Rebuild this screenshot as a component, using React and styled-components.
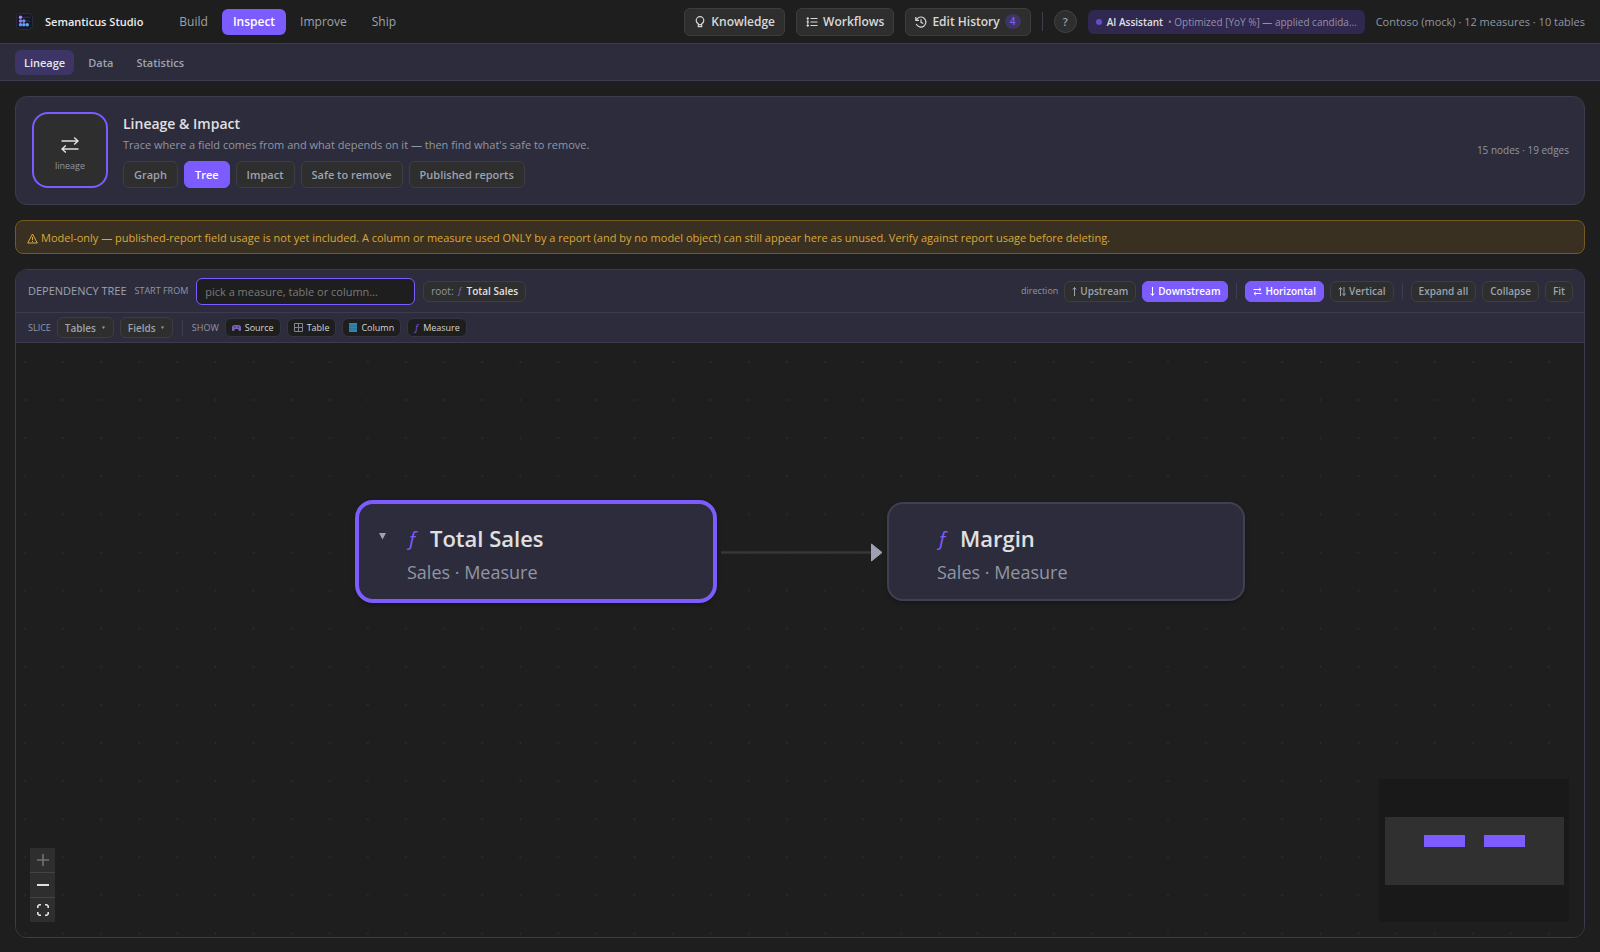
import React, { useState } from "react";
import styled, { createGlobalStyle, css } from "styled-components";

const GlobalStyle = createGlobalStyle`
  * {
    box-sizing: border-box;
  }
  body {
    margin: 0;
    background: #1e1e1e;
    color: #e0e0e0;
    font-family: "Open Sans", "Noto Sans", sans-serif;
    font-size: 12px;
    line-height: 18px;
  }
  button, input, select {
    font-family: inherit;
    margin: 0;
  }
  h1, h2, p {
    margin: 0;
  }
`;

const Page = styled.div`
  display: flex;
  flex-direction: column;
  min-height: 100vh;
`;

const Header = styled.header`
  display: flex;
  align-items: center;
  justify-content: space-between;
  height: 44px;
  padding: 0 15px 0 16px;
  border-bottom: 1px solid #3c3a45;
`;

const HeaderGroup = styled.div`
  display: flex;
  align-items: center;
  gap: ${(props) => props.$gap || 12}px;
`;

const Brand = styled.h1`
  font-size: 11px;
  font-weight: 600;
  line-height: 18px;
  color: #ececec;
`;

const MainNav = styled.nav`
  display: flex;
  gap: 3px;
  margin-left: 13px;
`;

const MainTab = styled.button`
  height: 26px;
  padding: 0 11px;
  border: 0;
  border-radius: 6px;
  background: ${(props) => (props.$active ? "#7c5cff" : "transparent")};
  color: ${(props) => (props.$active ? "#fff" : "#9ca3af")};
  font-size: 12px;
  font-weight: ${(props) => (props.$active ? 600 : 500)};
  cursor: pointer;
`;

const HeaderButton = styled.button`
  display: flex;
  align-items: center;
  gap: 5px;
  height: 28px;
  padding: 0 9px;
  border: 1px solid #3e3e3e;
  border-radius: 6px;
  background: #2e2e2e;
  color: #d8d8d8;
  font-size: 12px;
  font-weight: 600;
  white-space: nowrap;
  cursor: pointer;
`;

const Count = styled.span`
  min-width: 16px;
  height: 15px;
  border-radius: 8px;
  background: #3d3563;
  color: #7c5cff;
  font-size: 10px;
  line-height: 15px;
  text-align: center;
`;

const Divider = styled.span`
  width: 1px;
  height: ${(props) => props.$height || 16}px;
  margin: 0 ${(props) => props.$space || 0}px;
  background: #3f3d4a;
`;

const HelpButton = styled.button`
  width: 23px;
  height: 23px;
  padding: 0;
  border: 1px solid #444;
  border-radius: 50%;
  background: #2e2e2e;
  color: #9ca3af;
  font-size: 11px;
  font-weight: 600;
  cursor: pointer;
`;

const AgentPill = styled.div`
  display: flex;
  align-items: center;
  gap: 5px;
  height: 24px;
  padding: 0 8px;
  border-radius: 6px;
  background: #30284f;
  color: #9590a8;
  font-size: 10px;
  line-height: 16px;
  white-space: nowrap;
  b {
    color: #e0e0e0;
    font-weight: 600;
  }
`;

const StatusDot = styled.i`
  flex: none;
  width: 6px;
  height: 6px;
  border-radius: 50%;
  background: #674bcf;
`;

const Muted = styled.span`
  color: #9096a3;
  font-size: ${(props) => props.$size || 11}px;
  white-space: nowrap;
`;

const SubNav = styled.nav`
  display: flex;
  align-items: center;
  gap: 5px;
  height: 37px;
  padding: 0 15px;
  border-bottom: 1px solid #3d3b4d;
  background: #2d2c3c;
`;

const SubTab = styled.button`
  height: 25px;
  padding: 0 9px;
  border: 0;
  border-radius: 6px;
  background: ${(props) => (props.$active ? "#3d3565" : "transparent")};
  color: ${(props) => (props.$active ? "#e6e6e6" : "#9ca3af")};
  font-size: 11px;
  font-weight: 600;
  cursor: pointer;
`;

const Main = styled.main`
  display: flex;
  flex: 1;
  flex-direction: column;
  gap: 15px;
  padding: 15px 15px 14px;
`;

const Hero = styled.section`
  display: flex;
  align-items: center;
  gap: 15px;
  padding: 15px 15px 16px 16px;
  border: 1px solid #3d3b4d;
  border-radius: 12px;
  background: #2d2c3c;
`;

const HeroIcon = styled.div`
  display: flex;
  flex-direction: column;
  align-items: center;
  justify-content: center;
  gap: 5px;
  width: 76px;
  height: 76px;
  padding-top: 8px;
  border: 2px solid #7c5cff;
  border-radius: 16px;
  background: #2e2e2e;
  color: #9096a3;
  font-size: 9px;
  line-height: 14px;
`;

const HeroBody = styled.div`
  flex: 1;
  h2 {
    font-size: 14px;
    font-weight: 600;
    line-height: 24px;
  }
  p {
    color: #9096a3;
    font-size: 11px;
    line-height: 18px;
  }
`;

const ModeRow = styled.div`
  display: flex;
  gap: 6px;
  margin-top: 7px;
`;

const buttonColors = css`
  border: 1px solid ${(props) => (props.$active ? "#7c5cff" : "#3e3e42")};
  background: ${(props) => (props.$active ? "#7c5cff" : "#2e2e2e")};
  color: ${(props) => (props.$active ? "#fff" : "#9ca3af")};
`;

const ModeButton = styled.button`
  ${buttonColors}
  height: 27px;
  padding: 0 10px;
  border-radius: 6px;
  font-size: 11px;
  font-weight: 600;
  cursor: pointer;
`;

const Warning = styled.div`
  display: flex;
  align-items: center;
  gap: 3px;
  padding: 8px 11px 6px;
  border: 1px solid #745a20;
  border-radius: 8px;
  background: #393022;
  color: #dba936;
  font-size: 11px;
`;

const Panel = styled.section`
  display: flex;
  flex: 1;
  flex-direction: column;
  overflow: hidden;
  border: 1px solid #3d3b4d;
  border-radius: 12px;
`;

const Toolbar = styled.div`
  display: flex;
  align-items: center;
  justify-content: space-between;
  height: 43px;
  padding: 0 11px 0 12px;
  border-bottom: 1px solid #3d3b4d;
  background: #2d2c3c;
`;

const FilterBar = styled(Toolbar)`
  justify-content: flex-start;
  gap: 6px;
  height: 30px;
`;

const ToolGroup = styled.div`
  display: flex;
  align-items: center;
  gap: ${(props) => props.$gap || 6}px;
`;

const PanelTitle = styled.h2`
  color: #9ca3af;
  font-size: 11px;
  font-weight: 500;
  line-height: 16px;
`;

const FieldLabel = styled.label`
  color: #9096a3;
  font-size: 9px;
  line-height: 16px;
`;

const RootInput = styled.input`
  width: 219px;
  height: 27px;
  padding: 0 8px;
  border: 1px solid #7c5cff;
  border-radius: 6px;
  outline: 0;
  background: #1e1e1e;
  color: #e0e0e0;
  font-size: 11px;
  &::placeholder {
    color: #7a7a7a;
    opacity: 1;
  }
`;

const RootChip = styled.span`
  display: flex;
  align-items: center;
  gap: 4px;
  height: 21px;
  padding: 0 7px;
  border: 1px solid #3e3e42;
  border-radius: 6px;
  background: #2e2e2e;
  color: #9096a3;
  font-size: 10px;
  b {
    color: #e0e0e0;
    font-weight: 600;
  }
`;

const Fx = styled.i`
  color: #7c5cff;
  font-size: ${(props) => props.$size || 9}px;
  font-weight: 400;
`;

const ToolButton = styled.button`
  ${buttonColors}
  display: flex;
  align-items: center;
  gap: 3px;
  height: 21px;
  padding: 0 7px;
  border-radius: 6px;
  font-size: 10px;
  font-weight: 600;
  white-space: nowrap;
  cursor: pointer;
`;

const SelectBox = styled.span`
  display: flex;
  align-items: center;
  gap: 4px;
  height: 21px;
  padding: 0 7px;
  border: 1px solid #3e3e42;
  border-radius: 6px;
  background: #2e2e2e;
  select {
    appearance: none;
    padding: 0;
    border: 0;
    background: transparent;
    color: #9ca3af;
    font-size: 10px;
    font-weight: 600;
  }
`;

const Chip = styled.button`
  display: flex;
  align-items: center;
  gap: 4px;
  height: 19px;
  padding: 0 6px;
  border: 1px solid #353444;
  border-radius: 6px;
  background: #1e1e1e;
  color: #d4d4d4;
  font-size: 9px;
  font-weight: 500;
  cursor: pointer;
`;

const Canvas = styled.div`
  position: relative;
  flex: 1;
  min-height: 400px;
  background: #1e1e1e;
`;

const Dots = styled.svg`
  position: absolute;
  inset: 0;
  width: 100%;
  height: 100%;
`;

const Flow = styled.div`
  position: absolute;
  top: 157px;
  left: 0;
  right: 0;
  display: flex;
  align-items: center;
  justify-content: center;
`;

const Node = styled.div`
  display: flex;
  gap: 14px;
  width: ${(props) => (props.$root ? 362 : 358)}px;
  height: ${(props) => (props.$root ? 103 : 99)}px;
  padding: ${(props) => (props.$root ? "18px 20px" : "18px 20px")};
  border: ${(props) => (props.$root ? "4px solid #7c5cff" : "2px solid #413f52")};
  border-radius: ${(props) => (props.$root ? 18 : 16)}px;
  background: #2d2c3c;
  box-shadow: 0 2px 4px rgba(0, 0, 0, 0.25);
`;

const Caret = styled.span`
  width: 14px;
  padding-top: 11px;
  line-height: 0;
`;

const NodeTitle = styled.div`
  display: flex;
  align-items: center;
  gap: 12px;
  color: #e0e0e0;
  font-size: 22px;
  font-weight: 600;
  line-height: 32px;
`;

const NodeMeta = styled.div`
  color: #9096a3;
  font-size: 18px;
  line-height: 36px;
`;

const Controls = styled.div`
  position: absolute;
  left: 14px;
  bottom: 15px;
  display: flex;
  flex-direction: column;
  gap: 1px;
  background: #444;
  button {
    display: flex;
    align-items: center;
    justify-content: center;
    width: 25px;
    height: 24px;
    padding: 0;
    border: 0;
    background: #2e2e2e;
    color: #e0e0e0;
    cursor: pointer;
  }
  button:disabled {
    color: #727272;
    cursor: default;
  }
`;

const MiniMap = styled.svg`
  position: absolute;
  right: 15px;
  bottom: 15px;
`;

const Logo = () => (
  <svg width="17" height="17" viewBox="0 0 17 17">
    <rect x="0.5" y="0.5" width="16" height="16" rx="3.5" fill="#17172a" stroke="#2a2a38" />
    <path d="M5 4.300h9M8 8h6" stroke="#34344c" />
    <circle cx="4.500" cy="4.300" r="1.700" fill="#a78bfa" />
    <circle cx="4.500" cy="8" r="1.700" fill="#8a80fa" />
    <circle cx="7.800" cy="8" r="1.700" fill="#7c86fa" />
    <circle cx="4.500" cy="11.700" r="1.700" fill="#6f90fa" />
    <circle cx="7.800" cy="11.700" r="1.700" fill="#60a5fa" />
    <circle cx="11.200" cy="11.700" r="1.700" fill="#4fb2fa" />
  </svg>
);

const BulbIcon = () => (
  <svg width="12" height="12" viewBox="0 0 12 12" fill="none" stroke="currentColor" strokeWidth="1.200">
    <path d="M4.300 8.700V7.800C3 7 2.200 6 2.200 4.500a3.800 3.800 0 0 1 7.600 0c0 1.500-.8 2.500-2.100 3.300v.9zM4.300 8.700v2h3.400v-2" />
  </svg>
);

const ListIcon = () => (
  <svg width="12" height="12" viewBox="0 0 12 12" fill="none" stroke="currentColor">
    <path d="M4.500 2.500H11.500M4.500 6H11.500M4.500 9.500H11.500M.5 2.500h2.500M.5 6h2.500M.5 9.500h2.500M1.800 1v10" />
  </svg>
);

const HistoryIcon = () => (
  <svg width="12" height="12" viewBox="0 0 12 12" fill="none" stroke="currentColor" strokeWidth="1.200">
    <path d="M.8 1v3.300h3.200M1.200 4.300A5 5 0 1 1 1.300 8M6 3.300v3l2.200 1.200" />
  </svg>
);

const LineageIcon = () => (
  <svg width="18" height="18" viewBox="0 0 18 18" fill="none" stroke="#e0e0e0" strokeWidth="1.500">
    <path d="M.5 5H17M13.200 1.500 17 5l-3.800 3.500M17.500 13H1M4.800 9.500 1 13l3.800 3.500" />
  </svg>
);

const WarnIcon = () => (
  <svg width="11" height="11" viewBox="0 0 11 11" fill="none" stroke="currentColor">
    <path d="M5.500 1 10.300 10H.7zM5.500 4v3.200M5.500 8v1" />
  </svg>
);

// small direction glyphs for the toolbar buttons
const arrows = {
  up: ["M2.500 10V1.500M.8 3.500 2.500 1.500l1.700 2", 5],
  down: ["M2.500 1v8.500M.8 7.500l1.700 2 1.700-2", 5],
  both: ["M.5 3.500H8M6.200 1.800 8 3.500 6.200 5.200M8.500 7.500H1M2.800 5.800 1 7.500l1.800 1.700", 9],
  vertical: ["M2.500 10V1.500M.8 3.500 2.500 1.500l1.700 2M6 1v8.500M4.300 7.500 6 9.500l1.700-2", 8],
};

const Arrow = ({ name }) => (
  <svg width={arrows[name][1]} height="11" fill="none" stroke="currentColor">
    <path d={arrows[name][0]} />
  </svg>
);

const SmallCaret = () => (
  <svg width="5" height="4">
    <path d="M1 .5h3L2.500 3z" fill="#9ca3af" />
  </svg>
);

const SourceIcon = () => (
  <svg width="9" height="9" viewBox="0 0 9 9">
    <path d="M0 7V4.500Q0 2 2.500 2h4Q9 2 9 4.500V7Q9 8 8 8H7L6 6H3L2 8H1Q0 8 0 7z" fill="#7a62b8" />
    <path d="M2 4h1.500M5.500 4H7" stroke="#2d2c3c" />
  </svg>
);

const TableIcon = () => (
  <svg width="9" height="9" fill="none" stroke="#80858f">
    <path d="M.5.500h8v8h-8zM.5 4.500h8M4.500.500v8" />
  </svg>
);

const ColumnIcon = () => (
  <svg width="8" height="9">
    <path d="M0 0h8v9H0z" fill="#3286ad" />
    <path d="M0 3h8M0 6h8" stroke="#276a8a" />
  </svg>
);

const Edge = () => (
  <svg width="170" height="20" viewBox="0 0 170 20">
    <path d="M4 10.500H155" stroke="#37373b" strokeWidth="2.500" />
    <path d="M154.500 2 165 10.500 154.500 19z" fill="#9ca3af" stroke="#9ca3af" strokeLinejoin="round" />
  </svg>
);

const mainTabs = ["Build", "Inspect", "Improve", "Ship"];
const subTabs = ["Lineage", "Data", "Statistics"];
const modes = ["Graph", "Tree", "Impact", "Safe to remove", "Published reports"];
const kinds = [
  { name: "Source", icon: <SourceIcon /> },
  { name: "Table", icon: <TableIcon /> },
  { name: "Column", icon: <ColumnIcon /> },
  { name: "Measure", icon: <Fx>ƒ</Fx> },
];

const TopBar = () => {
  const [tab, setTab] = useState("Inspect");

  return (
    <Header>
      <HeaderGroup>
        <Logo />
        <Brand>Semanticus Studio</Brand>
        <MainNav>
          {mainTabs.map((name) => (
            <MainTab key={name} $active={tab === name} onClick={() => setTab(name)}>
              {name}
            </MainTab>
          ))}
        </MainNav>
      </HeaderGroup>
      <HeaderGroup $gap={11}>
        <HeaderButton><BulbIcon />Knowledge</HeaderButton>
        <HeaderButton><ListIcon />Workflows</HeaderButton>
        <HeaderButton><HistoryIcon />Edit History<Count>4</Count></HeaderButton>
        <Divider $height={19} />
        <HelpButton>?</HelpButton>
        <AgentPill>
          <StatusDot />
          <b>AI Assistant</b>
          <span>• Optimized [YoY %] — applied candida…</span>
        </AgentPill>
        <Muted>Contoso (mock) · 12 measures · 10 tables</Muted>
      </HeaderGroup>
    </Header>
  );
};

const HeroCard = () => {
  const [mode, setMode] = useState("Tree");

  return (
    <Hero>
      <HeroIcon>
        <LineageIcon />
        lineage
      </HeroIcon>
      <HeroBody>
        <h2>Lineage &amp; Impact</h2>
        <p>Trace where a field comes from and what depends on it — then find what's safe to remove.</p>
        <ModeRow>
          {modes.map((name) => (
            <ModeButton key={name} $active={mode === name} onClick={() => setMode(name)}>
              {name}
            </ModeButton>
          ))}
        </ModeRow>
      </HeroBody>
      <Muted $size={10}>15 nodes · 19 edges</Muted>
    </Hero>
  );
};

const TreeToolbar = () => {
  const [direction, setDirection] = useState("down");
  const [layout, setLayout] = useState("h");

  return (
    <Toolbar>
      <ToolGroup $gap={8}>
        <PanelTitle>DEPENDENCY TREE</PanelTitle>
        <FieldLabel htmlFor="root">START FROM</FieldLabel>
        <RootInput id="root" placeholder="pick a measure, table or column…" />
        <RootChip>root: <Fx>ƒ</Fx><b>Total Sales</b></RootChip>
      </ToolGroup>
      <ToolGroup>
        <Muted $size={9}>direction</Muted>
        <ToolButton $active={direction === "up"} onClick={() => setDirection("up")}>
          <Arrow name="up" />Upstream
        </ToolButton>
        <ToolButton $active={direction === "down"} onClick={() => setDirection("down")}>
          <Arrow name="down" />Downstream
        </ToolButton>
        <Divider $space={2} />
        <ToolButton $active={layout === "h"} onClick={() => setLayout("h")}>
          <Arrow name="both" />Horizontal
        </ToolButton>
        <ToolButton $active={layout === "v"} onClick={() => setLayout("v")}>
          <Arrow name="vertical" />Vertical
        </ToolButton>
        <Divider $space={2} />
        <ToolButton>Expand all</ToolButton>
        <ToolButton>Collapse</ToolButton>
        <ToolButton>Fit</ToolButton>
      </ToolGroup>
    </Toolbar>
  );
};

const Filters = () => (
  <FilterBar>
    <FieldLabel htmlFor="tables">SLICE</FieldLabel>
    <SelectBox>
      <select id="tables"><option>Tables</option></select>
      <SmallCaret />
    </SelectBox>
    <SelectBox>
      <select aria-label="Fields"><option>Fields</option></select>
      <SmallCaret />
    </SelectBox>
    <Divider $space={3} />
    <Muted $size={9}>SHOW</Muted>
    {kinds.map((kind) => (
      <Chip key={kind.name} aria-pressed="true">
        {kind.icon}
        {kind.name}
      </Chip>
    ))}
  </FilterBar>
);

const FlowNode = ({ title, meta, root }) => (
  <Node $root={root}>
    <Caret>
      {root && (
        <svg width="7" height="7">
          <path d="M0 0h7L3.500 6.500z" fill="#9ca3af" />
        </svg>
      )}
    </Caret>
    <div>
      <NodeTitle><Fx $size={20}>ƒ</Fx>{title}</NodeTitle>
      <NodeMeta>{meta}</NodeMeta>
    </div>
  </Node>
);

const TreeCanvas = () => (
  <Canvas>
    <Dots>
      <pattern id="dots" x="-10" y="18" width="38.100" height="38.100" patternUnits="userSpaceOnUse">
        <circle cx="19" cy="0.900" r="0.900" fill="#2f2f2f" />
      </pattern>
      <rect width="100%" height="100%" fill="url(#dots)" />
    </Dots>
    <Flow>
      <FlowNode root title="Total Sales" meta="Sales · Measure" />
      <Edge />
      <FlowNode title="Margin" meta="Sales · Measure" />
    </Flow>
    <Controls>
      <button disabled aria-label="zoom in">
        <svg width="12" height="12" stroke="currentColor" strokeWidth="1.600"><path d="M6 0v12M0 6h12" /></svg>
      </button>
      <button aria-label="zoom out">
        <svg width="12" height="12" stroke="currentColor" strokeWidth="2"><path d="M0 6h12" /></svg>
      </button>
      <button aria-label="fit view">
        <svg width="12" height="12" fill="none" stroke="currentColor" strokeWidth="1.600">
          <path d="M.8 4V2.200L2.200.8H4M8 .8h1.800l1.400 1.400V4M11.200 8v1.800l-1.400 1.400H8M4 11.200H2.200L.8 9.800V8" />
        </svg>
      </button>
    </Controls>
    <MiniMap width="190" height="143">
      <rect width="190" height="143" fill="#191919" />
      <rect x="6" y="38" width="179" height="68" fill="#303030" />
      <rect x="45" y="56" width="41" height="12" rx="0.500" fill="#7c5cff" />
      <rect x="105" y="56" width="41" height="12" rx="0.500" fill="#7c5cff" />
    </MiniMap>
  </Canvas>
);

const App = () => (
  <>
    <GlobalStyle />
    <Page>
      <TopBar />
      <SubNav>
        {subTabs.map((name) => (
          <SubTab key={name} $active={name === "Lineage"}>{name}</SubTab>
        ))}
      </SubNav>
      <Main>
        <HeroCard />
        <Warning>
          <WarnIcon />
          Model-only — published-report field usage is not yet included. A column or measure used ONLY by a report (and by no model object) can still appear here as unused. Verify against report usage before deleting.
        </Warning>
        <Panel>
          <TreeToolbar />
          <Filters />
          <TreeCanvas />
        </Panel>
      </Main>
    </Page>
  </>
);

export default App;
